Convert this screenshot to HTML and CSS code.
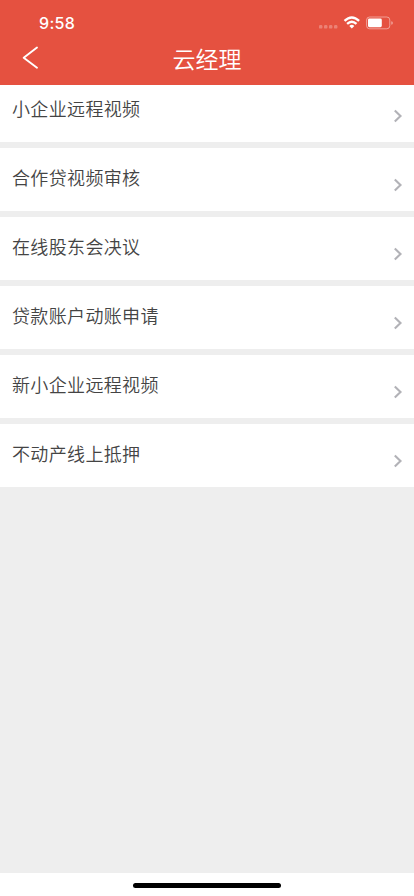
FILE: index.html
```html
<!DOCTYPE html>
<html lang="zh-CN">
<head>
<meta charset="utf-8">
<meta name="viewport" content="width=device-width, initial-scale=1">
<title>云经理</title>
<link rel="stylesheet" href="styles.css">
</head>
<body>
<header class="header">
  <div class="status">
    <span class="time">9:58</span>
    <svg class="indicators" width="76" height="16" viewBox="0 0 76 16" fill="none">
      <g fill="#fff" fill-opacity=".28"><rect x="1" y="10" width="3.4" height="3.6" rx="1.2"/><rect x="6" y="10" width="3.4" height="3.6" rx="1.2"/><rect x="11" y="10" width="3.4" height="3.6" rx="1.2"/><rect x="16" y="10" width="3.4" height="3.6" rx="1.2"/></g>
      <g stroke="#fff" stroke-width="2.3"><path d="M26.5 5.9Q33.8-1 41.1 5.9"/><path d="M29.1 8.9Q33.8 4.5 38.5 8.9"/></g>
      <path d="M31.3 10.9Q33.8 8.7 36.3 10.9L33.8 13.5Z" fill="#fff"/>
      <rect x="48.6" y="2" width="23.2" height="11.8" rx="3" stroke="#fff" stroke-opacity=".45"/>
      <rect x="50" y="3.6" width="13.8" height="8.6" rx="1.4" fill="#fff"/>
      <path d="M73.3 6.2Q74.8 6.5 74.8 8T73.3 9.8Z" fill="#fff" fill-opacity=".5"/>
    </svg>
  </div>
  <nav class="navbar">
    <svg class="back" width="18" height="24" viewBox="0 0 18 24" fill="none" stroke="#fff" stroke-width="1.9" stroke-linecap="round" stroke-linejoin="round"><path d="M15 1.5L1.7 11.8L15 21.8"/></svg>
    <h1 class="title">云经理</h1>
  </nav>
</header>
<main class="list">
  <a class="row"><span>小企业远程视频</span><svg class="chevron" viewBox="0 0 10 14"><path d="M1.8 1.5L7.5 7L1.8 12.5"/></svg></a>
  <a class="row"><span>合作贷视频审核</span><svg class="chevron" viewBox="0 0 10 14"><path d="M1.8 1.5L7.5 7L1.8 12.5"/></svg></a>
  <a class="row"><span>在线股东会决议</span><svg class="chevron" viewBox="0 0 10 14"><path d="M1.8 1.5L7.5 7L1.8 12.5"/></svg></a>
  <a class="row"><span>贷款账户动账申请</span><svg class="chevron" viewBox="0 0 10 14"><path d="M1.8 1.5L7.5 7L1.8 12.5"/></svg></a>
  <a class="row"><span>新小企业远程视频</span><svg class="chevron" viewBox="0 0 10 14"><path d="M1.8 1.5L7.5 7L1.8 12.5"/></svg></a>
  <a class="row"><span>不动产线上抵押</span><svg class="chevron" viewBox="0 0 10 14"><path d="M1.8 1.5L7.5 7L1.8 12.5"/></svg></a>
</main>
<footer class="home"><div class="home-bar"></div></footer>
</body>
</html>
```
FILE: styles.css
```css
* { box-sizing: border-box; }
body {
  margin: 0;
  height: 896px;
  display: flex;
  flex-direction: column;
  background: #fff;
  font-family: "Noto Sans CJK SC", sans-serif;
  overflow: hidden;
}
.header { height: 85px; flex: none; background: #e55140; color: #fff; }
.status {
  height: 45px;
  padding: 15px 20px 0 39px;
  display: flex;
  justify-content: space-between;
  align-items: flex-start;
}
.time { font: 550 16px/16px Inter, sans-serif; letter-spacing: 0.3px; }
.indicators { display: block; }
.navbar {
  height: 40px;
  padding: 1px 22px 0;
  display: grid;
  grid-template-columns: 18px 1fr 18px;
}
.back { display: block; }
.title { margin: -1px 0 0; font-size: 23px; line-height: 26px; font-weight: 350; text-align: center; }
.list {
  flex: 1;
  display: flex;
  flex-direction: column;
  gap: 6px;
  background: #eee;
}
.row {
  height: 63px;
  flex: none;
  padding: 16px 11px 0 12px;
  display: flex;
  justify-content: space-between;
  align-items: flex-start;
  background: #fff;
  color: #444;
  font-size: 18px;
  font-weight: 350;
  line-height: 26px;
  letter-spacing: 0.35px;
}
.row:first-child { height: 57px; padding-top: 10px; }
.chevron {
  width: 10px;
  height: 14px;
  margin-top: 14px;
  fill: none;
  stroke: #b2b2b7;
  stroke-width: 2.1;
}
.home { height: 23px; flex: none; padding-top: 10px; }
.home-bar { width: 148px; height: 5px; margin: 0 auto; border-radius: 3px; background: #000; }
```
